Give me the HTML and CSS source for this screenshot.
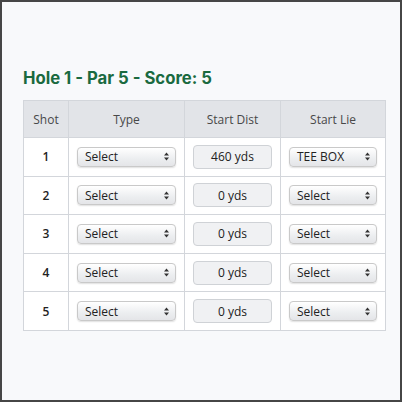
FILE: index.html
```html
<!DOCTYPE html>
<html>
<head>
<meta charset="utf-8">
<link rel="stylesheet" href="styles.css">
</head>
<body>
<div class="page">
  <h2 class="title">Hole 1 - Par 5 - Score: 5</h2>
  <table class="shots">
    <colgroup>
      <col class="c-shot"><col class="c-type"><col class="c-dist"><col class="c-lie">
    </colgroup>
    <thead>
      <tr><th>Shot</th><th>Type</th><th>Start Dist</th><th>Start Lie</th></tr>
    </thead>
    <tbody>
      <tr>
        <td class="num">1</td>
        <td><div class="sel"><span>Select</span><svg class="arr" width="5" height="9" viewBox="0 0 5 9"><path d="M2.5 0.5L5 3.6H0Z M2.5 8.5L5 5.4H0Z" fill="#333"/></svg></div></td>
        <td><div class="dist">460 yds</div></td>
        <td><div class="sel"><span>TEE BOX</span><svg class="arr" width="5" height="9" viewBox="0 0 5 9"><path d="M2.5 0.5L5 3.6H0Z M2.5 8.5L5 5.4H0Z" fill="#333"/></svg></div></td>
      </tr>
      <tr>
        <td class="num">2</td>
        <td><div class="sel"><span>Select</span><svg class="arr" width="5" height="9" viewBox="0 0 5 9"><path d="M2.5 0.5L5 3.6H0Z M2.5 8.5L5 5.4H0Z" fill="#333"/></svg></div></td>
        <td><div class="dist">0 yds</div></td>
        <td><div class="sel"><span>Select</span><svg class="arr" width="5" height="9" viewBox="0 0 5 9"><path d="M2.5 0.5L5 3.6H0Z M2.5 8.5L5 5.4H0Z" fill="#333"/></svg></div></td>
      </tr>
      <tr>
        <td class="num">3</td>
        <td><div class="sel"><span>Select</span><svg class="arr" width="5" height="9" viewBox="0 0 5 9"><path d="M2.5 0.5L5 3.6H0Z M2.5 8.5L5 5.4H0Z" fill="#333"/></svg></div></td>
        <td><div class="dist">0 yds</div></td>
        <td><div class="sel"><span>Select</span><svg class="arr" width="5" height="9" viewBox="0 0 5 9"><path d="M2.5 0.5L5 3.6H0Z M2.5 8.5L5 5.4H0Z" fill="#333"/></svg></div></td>
      </tr>
      <tr>
        <td class="num">4</td>
        <td><div class="sel"><span>Select</span><svg class="arr" width="5" height="9" viewBox="0 0 5 9"><path d="M2.5 0.5L5 3.6H0Z M2.5 8.5L5 5.4H0Z" fill="#333"/></svg></div></td>
        <td><div class="dist">0 yds</div></td>
        <td><div class="sel"><span>Select</span><svg class="arr" width="5" height="9" viewBox="0 0 5 9"><path d="M2.5 0.5L5 3.6H0Z M2.5 8.5L5 5.4H0Z" fill="#333"/></svg></div></td>
      </tr>
      <tr>
        <td class="num">5</td>
        <td><div class="sel"><span>Select</span><svg class="arr" width="5" height="9" viewBox="0 0 5 9"><path d="M2.5 0.5L5 3.6H0Z M2.5 8.5L5 5.4H0Z" fill="#333"/></svg></div></td>
        <td><div class="dist">0 yds</div></td>
        <td><div class="sel"><span>Select</span><svg class="arr" width="5" height="9" viewBox="0 0 5 9"><path d="M2.5 0.5L5 3.6H0Z M2.5 8.5L5 5.4H0Z" fill="#333"/></svg></div></td>
      </tr>
    </tbody>
  </table>
</div>
</body>
</html>
```

FILE: styles.css
```css
html, body {
  margin: 0;
  padding: 0;
}
body {
  width: 402px;
  height: 402px;
  box-sizing: border-box;
  border: 2px solid #464646;
  background: #f8f9fb;
  font-family: "Open Sans", "Noto Sans", sans-serif;
}
.page {
  padding: 65px 0 0 21px;
}
.title {
  margin: 0 0 11px 0;
  font-family: Inter, "Noto Sans", sans-serif;
  font-weight: 700;
  font-size: 16.7px;
  line-height: 22px;
  color: #1a6a3f;
  letter-spacing: 0;
}
.shots {
  border-collapse: collapse;
  table-layout: fixed;
  width: 362px;
  background: #fff;
}
.c-shot { width: 45px; }
.c-type { width: 116px; }
.c-dist { width: 96px; }
.c-lie { width: 105px; }
.shots th, .shots td {
  border: 1px solid #d3d6db;
  padding: 0 8px;
  text-align: center;
  font-size: 12px;
  color: #333;
}
.shots th {
  background: #e2e4e8;
  height: 36px;
  font-weight: 500;
  color: #484848;
}
.shots td {
  height: 37.6px;
}
.shots td.num {
  font-weight: 600;
  color: #222;
  padding: 0;
}
.sel {
  display: flex;
  align-items: center;
  justify-content: space-between;
  height: 20px;
  box-sizing: border-box;
  padding: 0 6px 0 7px;
  border: 1px solid #c9c9c9;
  border-radius: 4px;
  background: linear-gradient(#ffffff, #eceef0 60%, #e4e5e8);
  box-shadow: 0 1px 1.5px rgba(0,0,0,0.12);
  font-size: 12px;
  color: #222;
  text-align: left;
}
.arr { display: block; }
.dist {
  height: 24px;
  box-sizing: border-box;
  border: 1px solid #cfd2d6;
  border-radius: 4px;
  background: #f0f1f3;
  display: flex;
  align-items: center;
  justify-content: center;
  font-size: 12px;
  color: #222;
}
```
